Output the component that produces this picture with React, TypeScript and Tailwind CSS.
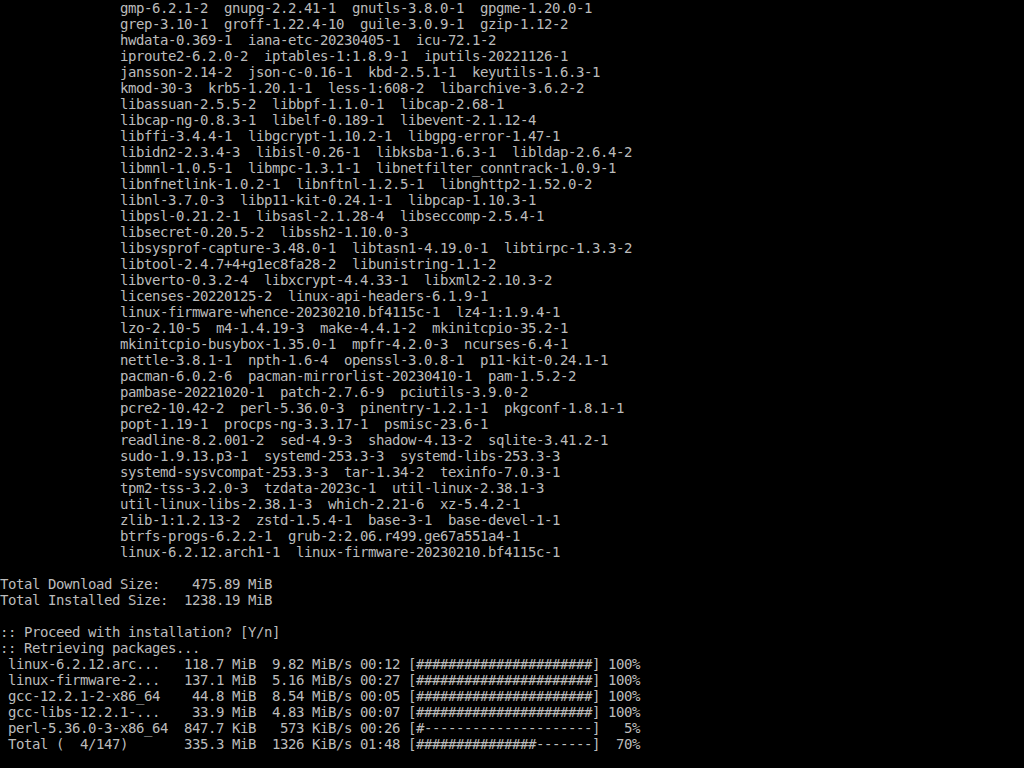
const packages = [
  "gmp-6.2.1-2  gnupg-2.2.41-1  gnutls-3.8.0-1  gpgme-1.20.0-1",
  "grep-3.10-1  groff-1.22.4-10  guile-3.0.9-1  gzip-1.12-2",
  "hwdata-0.369-1  iana-etc-20230405-1  icu-72.1-2",
  "iproute2-6.2.0-2  iptables-1:1.8.9-1  iputils-20221126-1",
  "jansson-2.14-2  json-c-0.16-1  kbd-2.5.1-1  keyutils-1.6.3-1",
  "kmod-30-3  krb5-1.20.1-1  less-1:608-2  libarchive-3.6.2-2",
  "libassuan-2.5.5-2  libbpf-1.1.0-1  libcap-2.68-1",
  "libcap-ng-0.8.3-1  libelf-0.189-1  libevent-2.1.12-4",
  "libffi-3.4.4-1  libgcrypt-1.10.2-1  libgpg-error-1.47-1",
  "libidn2-2.3.4-3  libisl-0.26-1  libksba-1.6.3-1  libldap-2.6.4-2",
  "libmnl-1.0.5-1  libmpc-1.3.1-1  libnetfilter_conntrack-1.0.9-1",
  "libnfnetlink-1.0.2-1  libnftnl-1.2.5-1  libnghttp2-1.52.0-2",
  "libnl-3.7.0-3  libp11-kit-0.24.1-1  libpcap-1.10.3-1",
  "libpsl-0.21.2-1  libsasl-2.1.28-4  libseccomp-2.5.4-1",
  "libsecret-0.20.5-2  libssh2-1.10.0-3",
  "libsysprof-capture-3.48.0-1  libtasn1-4.19.0-1  libtirpc-1.3.3-2",
  "libtool-2.4.7+4+g1ec8fa28-2  libunistring-1.1-2",
  "libverto-0.3.2-4  libxcrypt-4.4.33-1  libxml2-2.10.3-2",
  "licenses-20220125-2  linux-api-headers-6.1.9-1",
  "linux-firmware-whence-20230210.bf4115c-1  lz4-1:1.9.4-1",
  "lzo-2.10-5  m4-1.4.19-3  make-4.4.1-2  mkinitcpio-35.2-1",
  "mkinitcpio-busybox-1.35.0-1  mpfr-4.2.0-3  ncurses-6.4-1",
  "nettle-3.8.1-1  npth-1.6-4  openssl-3.0.8-1  p11-kit-0.24.1-1",
  "pacman-6.0.2-6  pacman-mirrorlist-20230410-1  pam-1.5.2-2",
  "pambase-20221020-1  patch-2.7.6-9  pciutils-3.9.0-2",
  "pcre2-10.42-2  perl-5.36.0-3  pinentry-1.2.1-1  pkgconf-1.8.1-1",
  "popt-1.19-1  procps-ng-3.3.17-1  psmisc-23.6-1",
  "readline-8.2.001-2  sed-4.9-3  shadow-4.13-2  sqlite-3.41.2-1",
  "sudo-1.9.13.p3-1  systemd-253.3-3  systemd-libs-253.3-3",
  "systemd-sysvcompat-253.3-3  tar-1.34-2  texinfo-7.0.3-1",
  "tpm2-tss-3.2.0-3  tzdata-2023c-1  util-linux-2.38.1-3",
  "util-linux-libs-2.38.1-3  which-2.21-6  xz-5.4.2-1",
  "zlib-1:1.2.13-2  zstd-1.5.4-1  base-3-1  base-devel-1-1",
  "btrfs-progs-6.2.2-1  grub-2:2.06.r499.ge67a551a4-1",
  "linux-6.2.12.arch1-1  linux-firmware-20230210.bf4115c-1",
];

const tail = [
  "",
  "Total Download Size:    475.89 MiB",
  "Total Installed Size:  1238.19 MiB",
  "",
  ":: Proceed with installation? [Y/n]",
  ":: Retrieving packages...",
  " linux-6.2.12.arc...   118.7 MiB  9.82 MiB/s 00:12 [######################] 100%",
  " linux-firmware-2...   137.1 MiB  5.16 MiB/s 00:27 [######################] 100%",
  " gcc-12.2.1-2-x86_64    44.8 MiB  8.54 MiB/s 00:05 [######################] 100%",
  " gcc-libs-12.2.1-...    33.9 MiB  4.83 MiB/s 00:07 [######################] 100%",
  " perl-5.36.0-3-x86_64  847.7 KiB   573 KiB/s 00:26 [#---------------------]   5%",
  " Total (  4/147)       335.3 MiB  1326 KiB/s 01:48 [###############-------]  70%",
];

export default function App() {
  return (
    <div className="w-[1024px] h-[768px] overflow-hidden bg-black text-[#bcbcbc] font-['DejaVu_Sans_Mono',monospace] text-[14px] tracking-[-0.43px] leading-[16px] whitespace-pre">
      {packages.map((line, i) => (
        <div key={"p" + i} className="h-4 pl-[120px]">{line}</div>
      ))}
      {tail.map((line, i) => (
        <div key={"t" + i} className="h-4">{line}</div>
      ))}
    </div>
  );
}
